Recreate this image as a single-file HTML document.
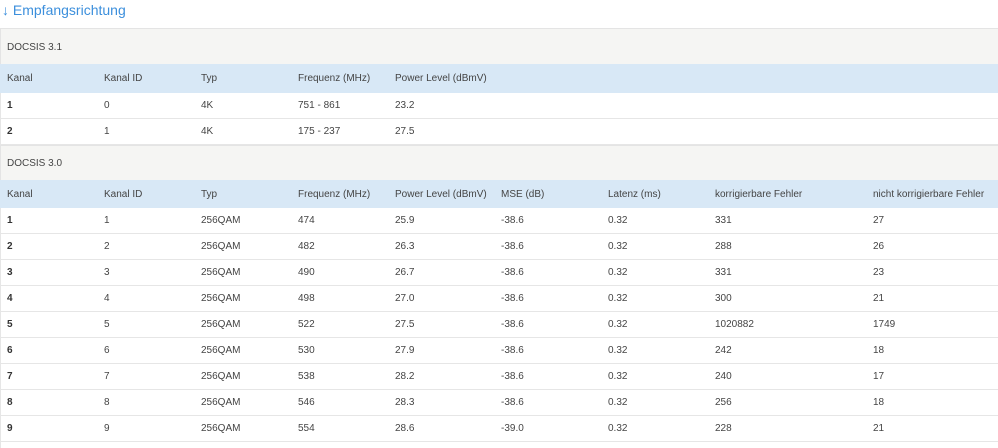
<!DOCTYPE html>
<html><head><meta charset="utf-8"><style>
body{margin:0;width:998px;height:448px;overflow:hidden;background:#fff;font-family:"Liberation Sans",sans-serif;font-size:10px;color:#444;position:relative}
.t{position:absolute;left:2px;top:2px;font-size:14px;color:#3c8fdc}
.b{position:absolute;left:0;width:998px;box-sizing:border-box}
.g{background:#f5f5f3;border-top:1px solid #e4e4e4;border-left:1px solid #e4e4e4}
.h{background:#d8e8f6}
.r{border-bottom:1px solid #e6e6e6;border-left:1px solid #e6e6e6}
.r .c{margin-left:-1px}
.c{position:absolute;white-space:nowrap}
.k{font-weight:bold;color:#333}
</style></head><body>
<div class="t">↓ Empfangsrichtung</div>

<div class="b g" style="top:28px;height:36px"><span class="c" style="left:6px;top:13px">DOCSIS 3.1</span></div>
<div class="b h" style="top:64px;height:29px">
<span class="c" style="left:7px;top:9px">Kanal</span><span class="c" style="left:104px;top:9px">Kanal ID</span><span class="c" style="left:201px;top:9px">Typ</span><span class="c" style="left:298px;top:9px">Frequenz (MHz)</span><span class="c" style="left:395px;top:9px">Power Level (dBmV)</span></div>
<div class="b r" style="top:93px;height:26px"><span class="c k" style="left:7px;top:7px">1</span><span class="c" style="left:104px;top:7px">0</span><span class="c" style="left:201px;top:7px">4K</span><span class="c" style="left:298px;top:7px">751 - 861</span><span class="c" style="left:395px;top:7px">23.2</span></div>
<div class="b r" style="top:119px;height:26px"><span class="c k" style="left:7px;top:7px">2</span><span class="c" style="left:104px;top:7px">1</span><span class="c" style="left:201px;top:7px">4K</span><span class="c" style="left:298px;top:7px">175 - 237</span><span class="c" style="left:395px;top:7px">27.5</span></div>

<div class="b g" style="top:145px;height:35px"><span class="c" style="left:6px;top:12px">DOCSIS 3.0</span></div>
<div class="b h" style="top:180px;height:28px">
<span class="c" style="left:7px;top:9px">Kanal</span><span class="c" style="left:104px;top:9px">Kanal ID</span><span class="c" style="left:201px;top:9px">Typ</span><span class="c" style="left:298px;top:9px">Frequenz (MHz)</span><span class="c" style="left:395px;top:9px">Power Level (dBmV)</span><span class="c" style="left:501px;top:9px">MSE (dB)</span><span class="c" style="left:608px;top:9px">Latenz (ms)</span><span class="c" style="left:715px;top:9px">korrigierbare Fehler</span><span class="c" style="left:873px;top:9px">nicht korrigierbare Fehler</span></div>

<div class="b r" style="top:208px;height:26px"><span class="c k" style="left:7px;top:7px">1</span><span class="c" style="left:104px;top:7px">1</span><span class="c" style="left:201px;top:7px">256QAM</span><span class="c" style="left:298px;top:7px">474</span><span class="c" style="left:395px;top:7px">25.9</span><span class="c" style="left:501px;top:7px">-38.6</span><span class="c" style="left:608px;top:7px">0.32</span><span class="c" style="left:715px;top:7px">331</span><span class="c" style="left:873px;top:7px">27</span></div>
<div class="b r" style="top:234px;height:26px"><span class="c k" style="left:7px;top:7px">2</span><span class="c" style="left:104px;top:7px">2</span><span class="c" style="left:201px;top:7px">256QAM</span><span class="c" style="left:298px;top:7px">482</span><span class="c" style="left:395px;top:7px">26.3</span><span class="c" style="left:501px;top:7px">-38.6</span><span class="c" style="left:608px;top:7px">0.32</span><span class="c" style="left:715px;top:7px">288</span><span class="c" style="left:873px;top:7px">26</span></div>
<div class="b r" style="top:260px;height:26px"><span class="c k" style="left:7px;top:7px">3</span><span class="c" style="left:104px;top:7px">3</span><span class="c" style="left:201px;top:7px">256QAM</span><span class="c" style="left:298px;top:7px">490</span><span class="c" style="left:395px;top:7px">26.7</span><span class="c" style="left:501px;top:7px">-38.6</span><span class="c" style="left:608px;top:7px">0.32</span><span class="c" style="left:715px;top:7px">331</span><span class="c" style="left:873px;top:7px">23</span></div>
<div class="b r" style="top:286px;height:26px"><span class="c k" style="left:7px;top:7px">4</span><span class="c" style="left:104px;top:7px">4</span><span class="c" style="left:201px;top:7px">256QAM</span><span class="c" style="left:298px;top:7px">498</span><span class="c" style="left:395px;top:7px">27.0</span><span class="c" style="left:501px;top:7px">-38.6</span><span class="c" style="left:608px;top:7px">0.32</span><span class="c" style="left:715px;top:7px">300</span><span class="c" style="left:873px;top:7px">21</span></div>
<div class="b r" style="top:312px;height:26px"><span class="c k" style="left:7px;top:7px">5</span><span class="c" style="left:104px;top:7px">5</span><span class="c" style="left:201px;top:7px">256QAM</span><span class="c" style="left:298px;top:7px">522</span><span class="c" style="left:395px;top:7px">27.5</span><span class="c" style="left:501px;top:7px">-38.6</span><span class="c" style="left:608px;top:7px">0.32</span><span class="c" style="left:715px;top:7px">1020882</span><span class="c" style="left:873px;top:7px">1749</span></div>
<div class="b r" style="top:338px;height:26px"><span class="c k" style="left:7px;top:7px">6</span><span class="c" style="left:104px;top:7px">6</span><span class="c" style="left:201px;top:7px">256QAM</span><span class="c" style="left:298px;top:7px">530</span><span class="c" style="left:395px;top:7px">27.9</span><span class="c" style="left:501px;top:7px">-38.6</span><span class="c" style="left:608px;top:7px">0.32</span><span class="c" style="left:715px;top:7px">242</span><span class="c" style="left:873px;top:7px">18</span></div>
<div class="b r" style="top:364px;height:26px"><span class="c k" style="left:7px;top:7px">7</span><span class="c" style="left:104px;top:7px">7</span><span class="c" style="left:201px;top:7px">256QAM</span><span class="c" style="left:298px;top:7px">538</span><span class="c" style="left:395px;top:7px">28.2</span><span class="c" style="left:501px;top:7px">-38.6</span><span class="c" style="left:608px;top:7px">0.32</span><span class="c" style="left:715px;top:7px">240</span><span class="c" style="left:873px;top:7px">17</span></div>
<div class="b r" style="top:390px;height:26px"><span class="c k" style="left:7px;top:7px">8</span><span class="c" style="left:104px;top:7px">8</span><span class="c" style="left:201px;top:7px">256QAM</span><span class="c" style="left:298px;top:7px">546</span><span class="c" style="left:395px;top:7px">28.3</span><span class="c" style="left:501px;top:7px">-38.6</span><span class="c" style="left:608px;top:7px">0.32</span><span class="c" style="left:715px;top:7px">256</span><span class="c" style="left:873px;top:7px">18</span></div>
<div class="b r" style="top:416px;height:26px"><span class="c k" style="left:7px;top:7px">9</span><span class="c" style="left:104px;top:7px">9</span><span class="c" style="left:201px;top:7px">256QAM</span><span class="c" style="left:298px;top:7px">554</span><span class="c" style="left:395px;top:7px">28.6</span><span class="c" style="left:501px;top:7px">-39.0</span><span class="c" style="left:608px;top:7px">0.32</span><span class="c" style="left:715px;top:7px">228</span><span class="c" style="left:873px;top:7px">21</span></div>
<div class="b" style="top:442px;height:6px;border-left:1px solid #e6e6e6"></div>
</body></html>
